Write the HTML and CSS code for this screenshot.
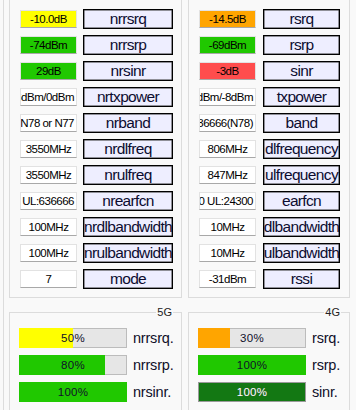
FILE: index.html
```html
<!DOCTYPE html>
<html lang="en">
<head>
  <meta charset="UTF-8">
  <title>Signal</title>
  <link rel="stylesheet" href="styles.css">
</head>
<body>
  <div class="panel">
    <div class="cols">
      <div class="grp grp-nr">
        <div class="row"><div class="val yellow">-10.0dB</div><div class="lbl">nrrsrq</div></div>
        <div class="row"><div class="val green">-74dBm</div><div class="lbl">nrrsrp</div></div>
        <div class="row"><div class="val green">29dB</div><div class="lbl">nrsinr</div></div>
        <div class="row"><div class="val end">26dBm/0dBm</div><div class="lbl">nrtxpower</div></div>
        <div class="row"><div class="val end">N78 or N77</div><div class="lbl">nrband</div></div>
        <div class="row"><div class="val">3550MHz</div><div class="lbl">nrdlfreq</div></div>
        <div class="row"><div class="val">3550MHz</div><div class="lbl">nrulfreq</div></div>
        <div class="row"><div class="val end">DL:636666 UL:636666</div><div class="lbl">nrearfcn</div></div>
        <div class="row"><div class="val">100MHz</div><div class="lbl">nrdlbandwidth</div></div>
        <div class="row"><div class="val">100MHz</div><div class="lbl">nrulbandwidth</div></div>
        <div class="row"><div class="val">7</div><div class="lbl">mode</div></div>
      </div>
      <div class="grp grp-lte">
        <div class="row"><div class="val orange">-14.5dB</div><div class="lbl">rsrq</div></div>
        <div class="row"><div class="val green">-69dBm</div><div class="lbl">rsrp</div></div>
        <div class="row"><div class="val red">-3dB</div><div class="lbl">sinr</div></div>
        <div class="row"><div class="val end">23dBm/-8dBm</div><div class="lbl">txpower</div></div>
        <div class="row"><div class="val end">B20 636666(N78)</div><div class="lbl">band</div></div>
        <div class="row"><div class="val">806MHz</div><div class="lbl">dlfrequency</div></div>
        <div class="row"><div class="val">847MHz</div><div class="lbl">ulfrequency</div></div>
        <div class="row"><div class="val end">DL:6300 UL:24300</div><div class="lbl">earfcn</div></div>
        <div class="row"><div class="val">10MHz</div><div class="lbl">dlbandwidth</div></div>
        <div class="row"><div class="val">10MHz</div><div class="lbl">ulbandwidth</div></div>
        <div class="row"><div class="val">-31dBm</div><div class="lbl">rssi</div></div>
      </div>
    </div>

    <div class="cols">
      <div class="grp box grp-nr">
        <span class="legend">5G</span>
        <div class="bar-row">
          <div class="bar"><div class="fill yellow" style="width:50%"></div><span class="pct">50%</span></div>
          <span class="bar-lbl">nrrsrq.</span>
        </div>
        <div class="bar-row">
          <div class="bar"><div class="fill green" style="width:80%"></div><span class="pct">80%</span></div>
          <span class="bar-lbl">nrrsrp.</span>
        </div>
        <div class="bar-row">
          <div class="bar"><div class="fill green" style="width:100%"></div><span class="pct">100%</span></div>
          <span class="bar-lbl">nrsinr.</span>
        </div>
      </div>
      <div class="grp box grp-lte">
        <span class="legend">4G</span>
        <div class="bar-row">
          <div class="bar"><div class="fill orange" style="width:30%"></div><span class="pct">30%</span></div>
          <span class="bar-lbl">rsrq.</span>
        </div>
        <div class="bar-row">
          <div class="bar"><div class="fill green" style="width:100%"></div><span class="pct">100%</span></div>
          <span class="bar-lbl">rsrp.</span>
        </div>
        <div class="bar-row">
          <div class="bar"><div class="fill dark" style="width:100%"></div><span class="pct light">100%</span></div>
          <span class="bar-lbl">sinr.</span>
        </div>
      </div>
    </div>
  </div>
</body>
</html>
```

FILE: styles.css
```css
* { box-sizing: border-box; margin: 0; padding: 0; }
body {
  font-family: 'Liberation Sans', Arial, sans-serif;
  background: #f9f9f9;
  color: #000;
  height: 410px;
  overflow: hidden;
}
.panel {
  margin-left: 3px;
  padding-left: 5px;
  border-left: 1px solid #dcdcdc;
  min-height: 100%;
}
.cols {
  display: flex;
  gap: 6px;
}
.grp {
  border: 1px solid #dcdcdc;
  border-top: none;
  padding: 9px 8px 8px 10px;
  display: flex;
  flex-direction: column;
  gap: 6px;
}
.grp-nr { width: 173px; }
.grp-lte { width: 162px; padding-right: 9px; }
.row {
  display: flex;
  align-items: center;
  gap: 6px;
  height: 20px;
}
.grp-lte .row { gap: 7px; }
.val {
  width: 57px;
  height: 18px;
  flex: none;
  background: #fff;
  border: 1px solid #e2e2e2;
  border-bottom-color: #a8a8a8;
  display: flex;
  align-items: center;
  justify-content: center;
  overflow: hidden;
  white-space: nowrap;
  font-size: 11.5px;
  letter-spacing: -0.5px;
}
.val.end { justify-content: flex-end; padding-right: 2px; }
.lbl {
  flex: 1;
  height: 20px;
  background: #eeeeff;
  border: 1px solid #000;
  box-shadow: inset 0 0 0 0.5px #333;
  display: flex;
  align-items: center;
  justify-content: center;
  overflow: hidden;
  white-space: nowrap;
  font-size: 15.5px;
  letter-spacing: -0.65px;
  color: #0c0c30;
}
.yellow { background: #ffff00; }
.green { background: #20c800; }
.orange { background: #ffa500; }
.red { background: #ff4d4d; }
.dark { background: #137813; box-shadow: inset 0 0 0 1px #9a9a9a; }

.box {
  position: relative;
  margin-top: 14px;
  border-top: 1px solid #dcdcdc;
  padding: 15px 8px 8px 9px;
  gap: 7px;
  height: 120px;
}
.legend {
  position: absolute;
  top: -7px;
  right: 8px;
  padding: 0 1px;
  background: #f9f9f9;
  font-size: 11px;
  line-height: 13px;
  color: #222;
}
.bar-row {
  display: flex;
  align-items: center;
  gap: 6px;
}
.bar {
  width: 108px;
  height: 20px;
  flex: none;
  display: grid;
  background: #e6e6e6;
  box-shadow: inset 0 0 0 1px #bcbcbc;
}
.fill, .pct { grid-area: 1 / 1; }
.fill { height: 100%; }
.pct {
  align-self: center;
  justify-self: center;
  font-size: 11.5px;
  letter-spacing: 0.3px;
  color: #10102a;
}
.pct.light { color: #fff; text-shadow: 0 0 1px #555; }
.bar-lbl {
  font-size: 14.5px;
  letter-spacing: -0.2px;
  color: #10102a;
}
```
